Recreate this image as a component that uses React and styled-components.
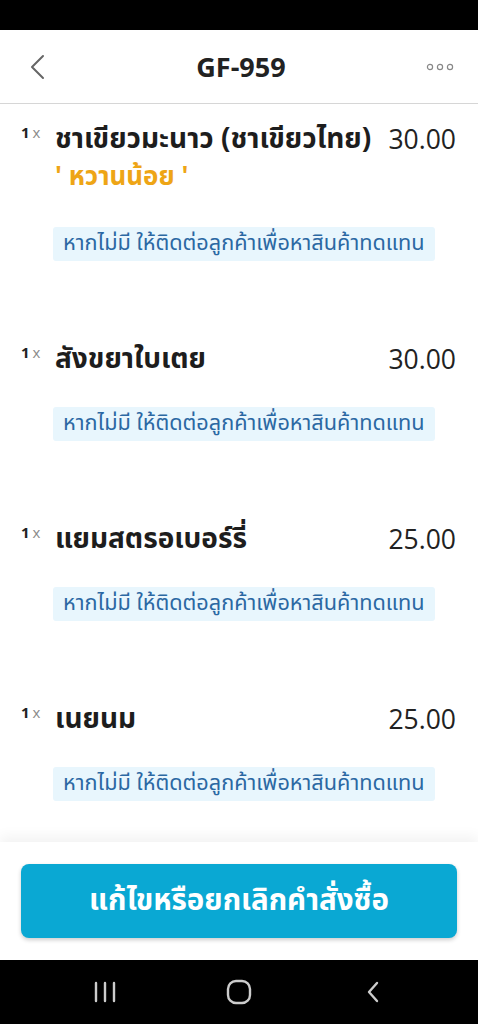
import React from 'react';
import styled, { createGlobalStyle } from 'styled-components';

const thaiFont = `'Noto Sans Thai', 'Noto Sans', 'Open Sans', sans-serif`;

const GlobalStyle = createGlobalStyle`
  html, body {
    margin: 0;
    padding: 0;
    background: #fff;
  }
  body {
    font-family: ${thaiFont};
  }
`;

const Screen = styled.div`
  width: 478px;
  height: 1024px;
  display: flex;
  flex-direction: column;
  background: #fff;
  overflow: hidden;
`;

const StatusBar = styled.div`
  height: 30px;
  background: #000;
  flex-shrink: 0;
`;

const Header = styled.header`
  height: 74px;
  flex-shrink: 0;
  display: flex;
  align-items: center;
  justify-content: space-between;
  padding: 0 24px 0 28px;
  border-bottom: 1px solid #d6d6d6;
  box-sizing: border-box;
`;

const Title = styled.h1`
  margin: 0;
  font-size: 27px;
  font-weight: 700;
  color: #222;
  font-family: 'Open Sans', 'Noto Sans', sans-serif;
`;

const IconSlot = styled.div`
  width: 28px;
  display: flex;
  align-items: center;
  justify-content: ${p => (p.$right ? 'flex-end' : 'flex-start')};
`;

const Content = styled.main`
  flex: 1;
  overflow: hidden;
  padding-top: 17px;
`;

const Item = styled.section`
  padding: 0 22px 0 21px;
  margin-bottom: 80px;
`;

const ItemRow = styled.div`
  display: flex;
  align-items: flex-start;
`;

const Qty = styled.div`
  width: 34px;
  flex-shrink: 0;
  padding-top: 2px;
  font-family: 'Open Sans', sans-serif;
  font-size: 15px;
  line-height: 18px;
  color: #222;
  font-weight: 700;
`;

const Times = styled.span`
  font-weight: 400;
  color: #8a8a8a;
  font-size: 15px;
  margin-left: 3px;
`;

const Body = styled.div`
  flex: 1;
  min-width: 0;
`;

const NameLine = styled.div`
  display: flex;
  justify-content: space-between;
  align-items: center;
  height: 36px;
`;

const Name = styled.div`
  font-size: 28px;
  font-weight: 700;
  color: #1d1d1d;
  white-space: nowrap;
`;

const Price = styled.div`
  font-family: 'Open Sans', sans-serif;
  font-size: 26.5px;
  color: #222;
`;

const Sweetness = styled.div`
  height: 40px;
  line-height: 40px;
  font-size: 26px;
  font-weight: 700;
  color: #eea516;
`;

const Note = styled.div`
  display: inline-block;
  margin-top: 30px;
  margin-left: -2px;
  padding: 0 10px;
  height: 34px;
  line-height: 34px;
  background: #e8f6fd;
  border-radius: 3px;
  font-size: 21.7px;
  color: #2b68a3;
  white-space: nowrap;
`;

const Footer = styled.footer`
  flex-shrink: 0;
  padding: 22px 21px;
  background: #fff;
  box-shadow: 0 -6px 12px rgba(0, 0, 0, 0.05);
  position: relative;
`;

const ActionButton = styled.button`
  width: 100%;
  height: 74px;
  border: none;
  border-radius: 8px;
  background: #0aa8d3;
  color: #fff;
  font-family: ${thaiFont};
  font-size: 29.5px;
  font-weight: 700;
  box-shadow: 0 2px 4px rgba(0, 0, 0, 0.2);
`;

const NavBar = styled.nav`
  height: 64px;
  flex-shrink: 0;
  background: #000;
  display: flex;
  align-items: center;
  justify-content: center;
`;

const NavSlot = styled.div`
  width: 134px;
  display: flex;
  justify-content: center;
  align-items: center;
`;

const items = [
  { name: 'ชาเขียวมะนาว (ชาเขียวไทย)', price: '30.00', option: "' หวานน้อย '" },
  { name: 'สังขยาใบเตย', price: '30.00' },
  { name: 'แยมสตรอเบอร์รี่', price: '25.00' },
  { name: 'เนยนม', price: '25.00' },
];

function BackIcon() {
  return (
    <svg width="18" height="26" viewBox="0 0 18 26">
      <path d="M15 2 L4 13 L15 24" fill="none" stroke="#666" strokeWidth="2" strokeLinecap="round" strokeLinejoin="round" />
    </svg>
  );
}

function DotsIcon() {
  return (
    <svg width="28" height="8" viewBox="0 0 28 8">
      {[4, 14, 24].map(cx => (
        <circle key={cx} cx={cx} cy="4" r="2.6" fill="none" stroke="#888" strokeWidth="1.2" />
      ))}
    </svg>
  );
}

function App() {
  return (
    <Screen>
      <GlobalStyle />
      <StatusBar />
      <Header>
        <IconSlot><BackIcon /></IconSlot>
        <Title>GF-959</Title>
        <IconSlot $right><DotsIcon /></IconSlot>
      </Header>
      <Content>
        {items.map(item => (
          <Item key={item.name}>
            <ItemRow>
              <Qty>1<Times>x</Times></Qty>
              <Body>
                <NameLine>
                  <Name>{item.name}</Name>
                  <Price>{item.price}</Price>
                </NameLine>
                {item.option && <Sweetness>{item.option}</Sweetness>}
                <Note>หากไม่มี ให้ติดต่อลูกค้าเพื่อหาสินค้าทดแทน</Note>
              </Body>
            </ItemRow>
          </Item>
        ))}
      </Content>
      <Footer>
        <ActionButton>แก้ไขหรือยกเลิกคำสั่งซื้อ</ActionButton>
      </Footer>
      <NavBar>
        <NavSlot>
          <svg width="24" height="22" viewBox="0 0 24 22">
            {[3, 12, 21].map(x => (
              <line key={x} x1={x} y1="2" x2={x} y2="20" stroke="#ccc" strokeWidth="2.4" strokeLinecap="round" />
            ))}
          </svg>
        </NavSlot>
        <NavSlot>
          <svg width="26" height="26" viewBox="0 0 26 26">
            <rect x="2" y="2" width="22" height="22" rx="8" fill="none" stroke="#ccc" strokeWidth="2.4" />
          </svg>
        </NavSlot>
        <NavSlot>
          <svg width="16" height="24" viewBox="0 0 16 24">
            <path d="M12 3 L4 12 L12 21" fill="none" stroke="#ccc" strokeWidth="2.4" strokeLinecap="round" strokeLinejoin="round" />
          </svg>
        </NavSlot>
      </NavBar>
    </Screen>
  );
}

export default App;
